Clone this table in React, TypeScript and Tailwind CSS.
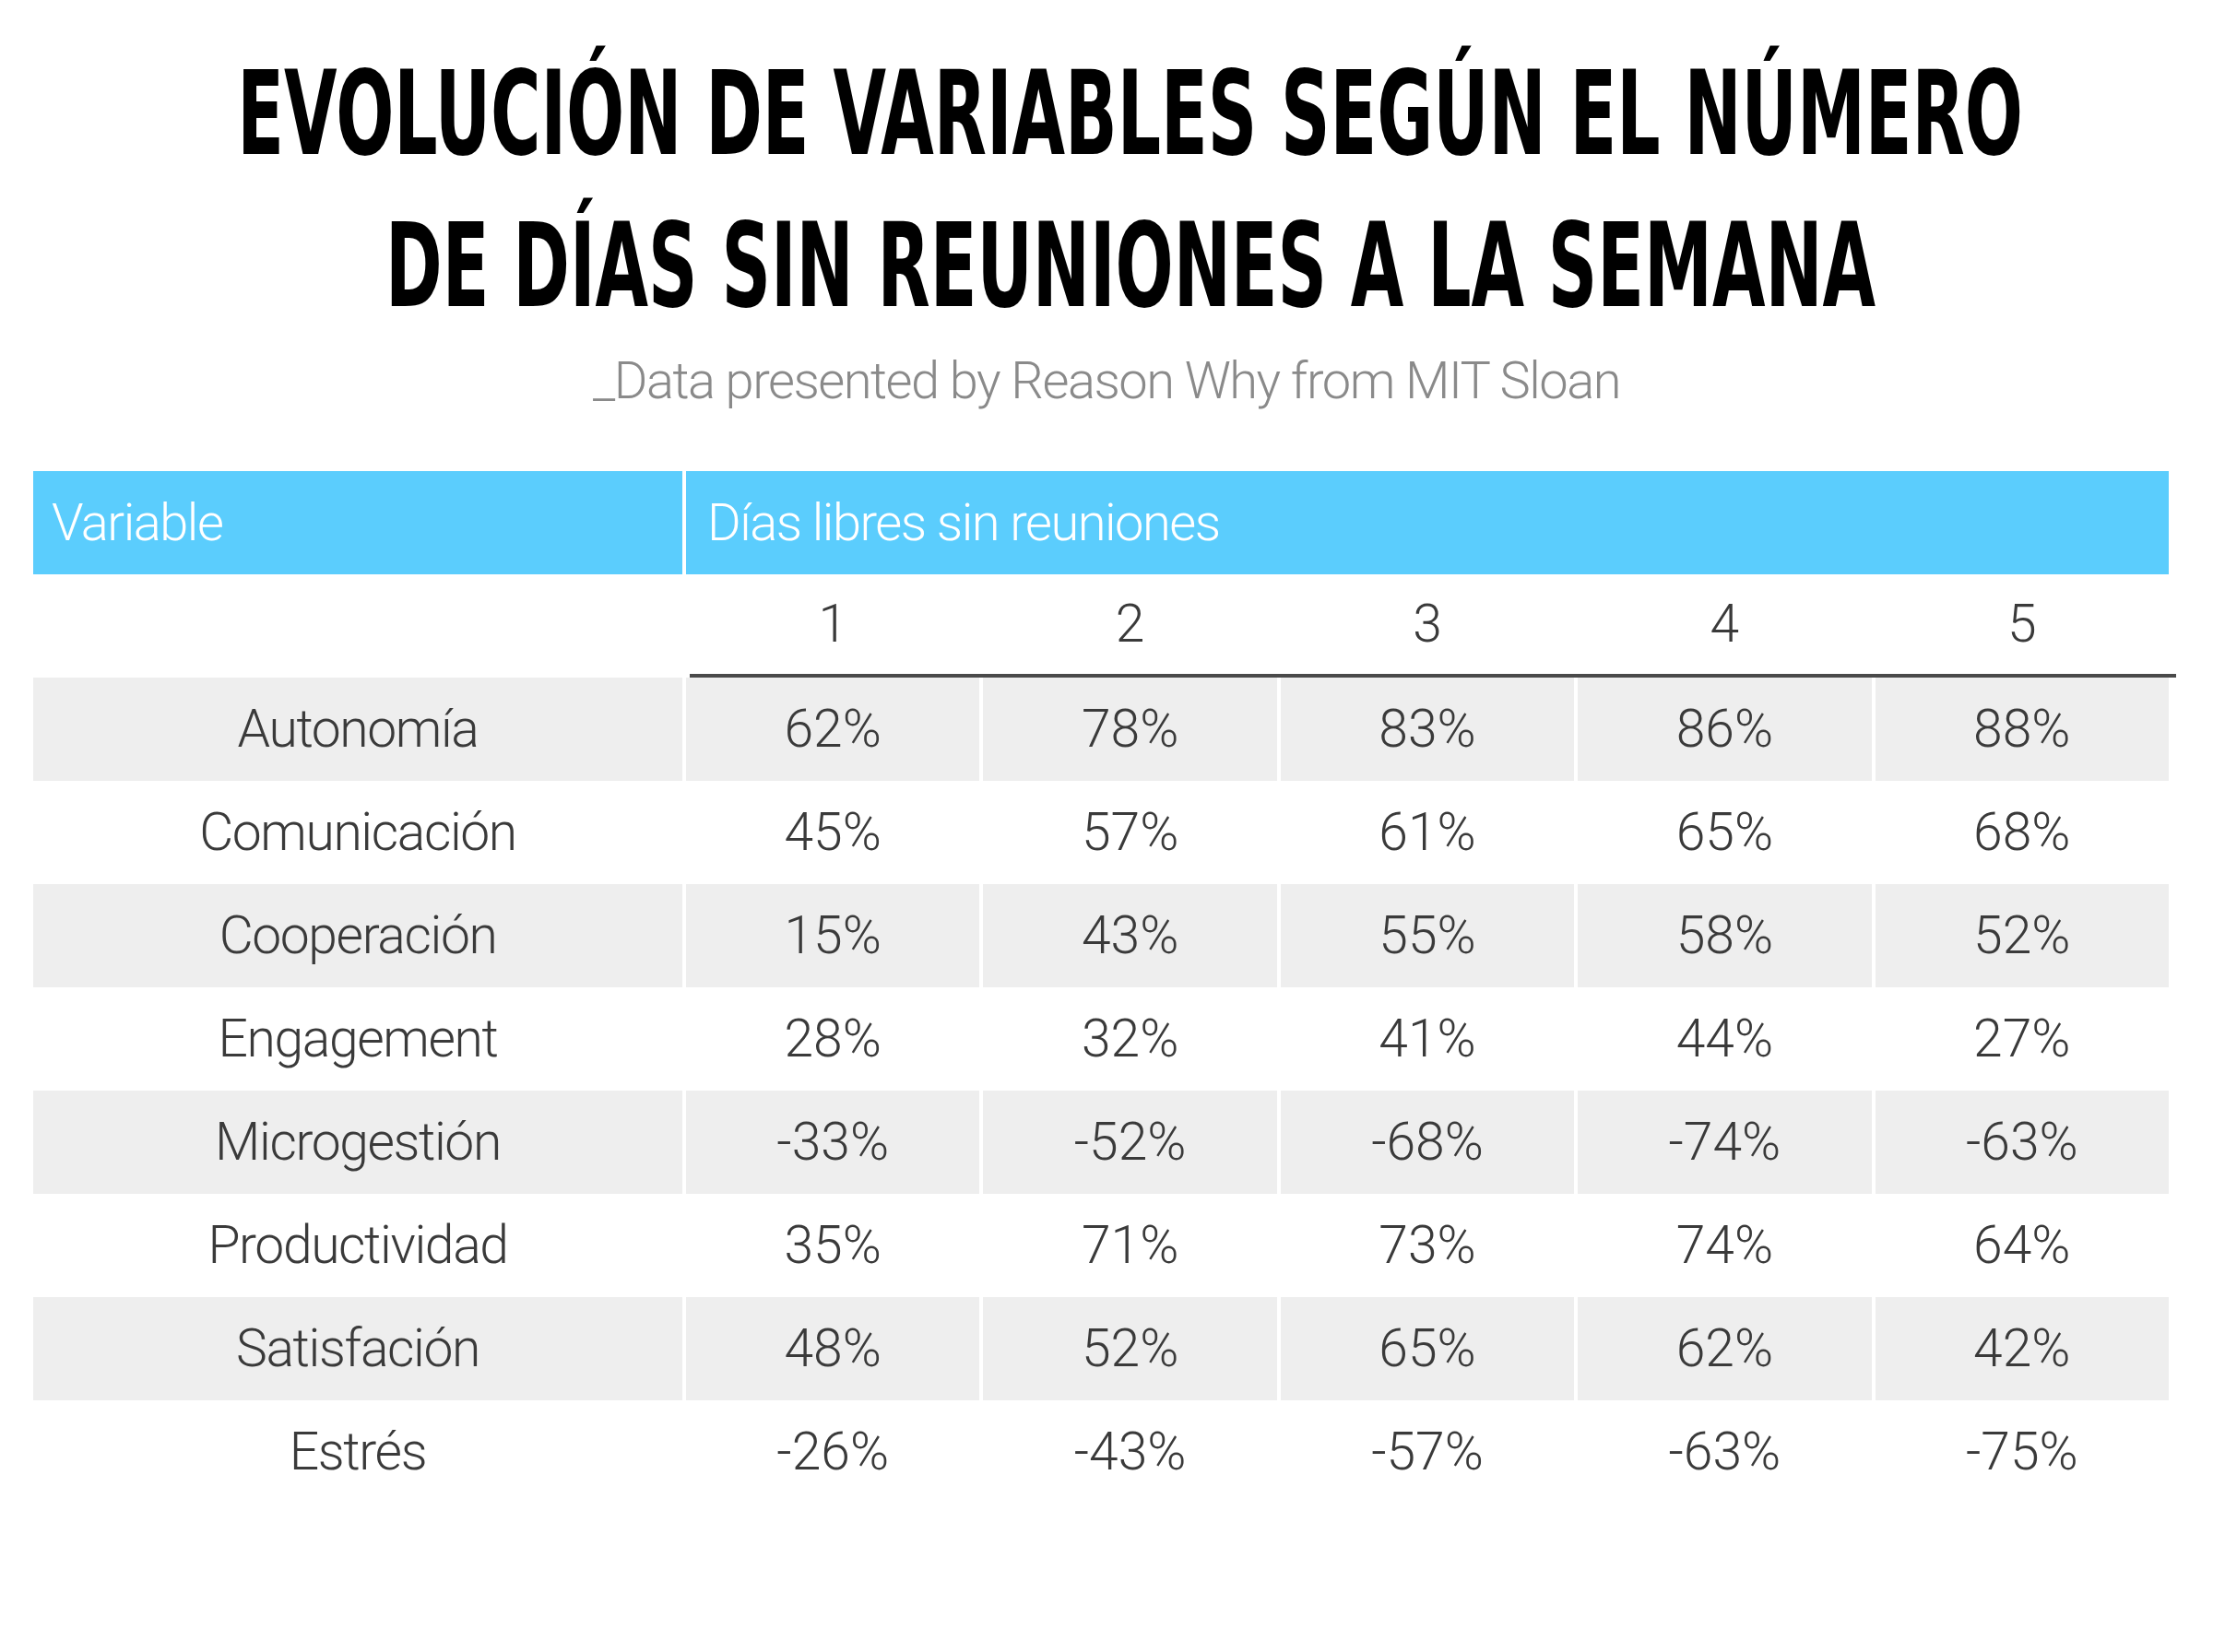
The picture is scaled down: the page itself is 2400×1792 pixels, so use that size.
import React from 'react';

interface Row {
  name: string;
  values: string[];
}

const rows: Row[] = [
  { name: 'Autonomía', values: ['62%', '78%', '83%', '86%', '88%'] },
  { name: 'Comunicación', values: ['45%', '57%', '61%', '65%', '68%'] },
  { name: 'Cooperación', values: ['15%', '43%', '55%', '58%', '52%'] },
  { name: 'Engagement', values: ['28%', '32%', '41%', '44%', '27%'] },
  { name: 'Microgestión', values: ['-33%', '-52%', '-68%', '-74%', '-63%'] },
  { name: 'Productividad', values: ['35%', '71%', '73%', '74%', '64%'] },
  { name: 'Satisfación', values: ['48%', '52%', '65%', '62%', '42%'] },
  { name: 'Estrés', values: ['-26%', '-43%', '-57%', '-63%', '-75%'] },
];

const days = ['1', '2', '3', '4', '5'];

const TitleLine: React.FC<{ text: string }> = ({ text }) => (
  <div className="flex h-[165px] justify-center leading-[165px]">
    <span className="inline-block shrink-0 whitespace-nowrap scale-x-[0.65]">{text}</span>
  </div>
);

const App: React.FC = () => {
  return (
    <div className="h-[1792px] w-[2400px] overflow-hidden bg-white font-['Roboto',sans-serif] font-light text-[#3a3a3a]">
      {/* title */}
      <h1 className="pl-[52px] pt-[41px] font-['Liberation_Sans_Narrow','DejaVu_Sans',sans-serif] text-[127px] font-bold text-black [font-stretch:condensed]">
        <TitleLine text="EVOLUCIÓN DE VARIABLES SEGÚN EL NÚMERO" />
        <TitleLine text="DE DÍAS SIN REUNIONES A LA SEMANA" />
      </h1>
      <p className="mt-[12px] h-[60px] text-center text-[56px] leading-[60px] tracking-[-1.5px] text-[#8a8a8a]">
        _Data presented by Reason Why from MIT Sloan
      </p>

      {/* table */}
      <div className="ml-[36px] mt-[68px] grid w-[2316px] grid-cols-[704px_repeat(5,1fr)] gap-x-[4px] text-[57px]">
        <div className="flex h-[112px] items-center bg-[#5bcdfd] pl-[20px] text-[56px] tracking-[-1.5px] text-white">Variable</div>
        <div className="col-span-5 flex h-[112px] items-center bg-[#5bcdfd] pl-[23px] text-[56px] tracking-[-1.5px] text-white">
          Días libres sin reuniones
        </div>

        <div className="h-[108px]" />
        {days.map(d => (
          <div key={d} className="flex h-[108px] items-center justify-center">{d}</div>
        ))}
        <div className="h-[4px]" />
        <div className="col-span-5 ml-[4px] mr-[-8px] h-[4px] bg-[#4a4a4a]" />

        {rows.map((row, i) => {
          const bg = i % 2 === 0 ? 'bg-[#eeeeee]' : '';
          return (
            <React.Fragment key={row.name}>
              <div className={`flex h-[112px] items-center justify-center tracking-[-1.4px] ${bg}`}>{row.name}</div>
              {row.values.map((v, j) => (
                <div key={j} className={`flex h-[112px] items-center justify-center ${bg}`}>{v}</div>
              ))}
            </React.Fragment>
          );
        })}
      </div>
    </div>
  );
};

export default App;
